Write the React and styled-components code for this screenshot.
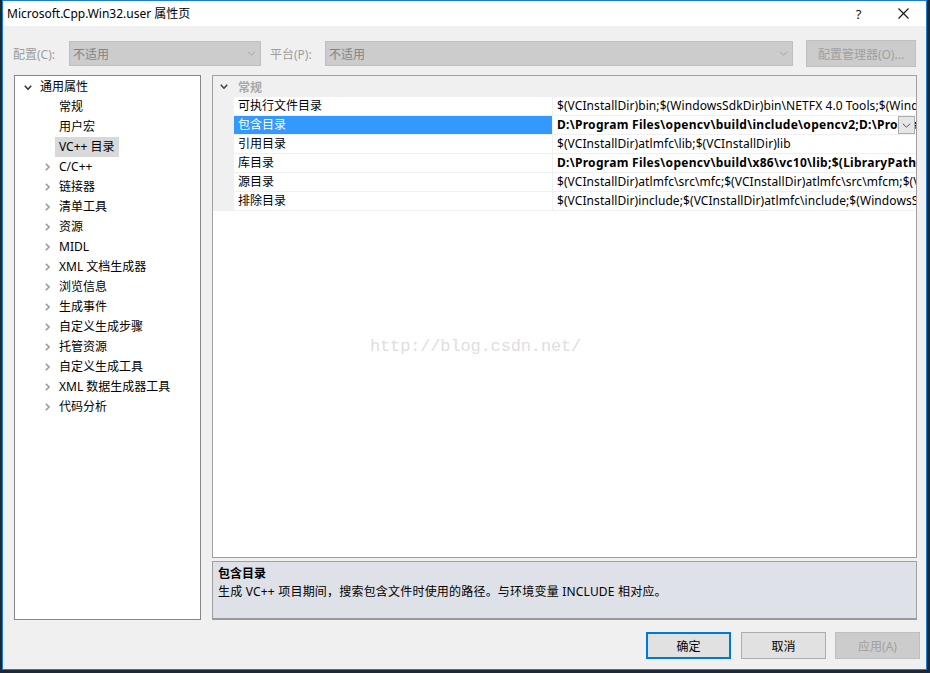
import React from 'react';
import styled, { createGlobalStyle } from 'styled-components';

const Global = createGlobalStyle`
  html, body { margin: 0; padding: 0; background: #1d2939; overflow: hidden; }
  body { font-family: "Noto Sans", "Noto Sans CJK SC", sans-serif; font-size: 12px; color: #000; }
  * { box-sizing: border-box; }
`;

const Window = styled.div`
  margin-left: 2px;
  width: 925px;
  height: 670px;
  border: 1px solid #1a7fd4;
  background: #f0f0f0;
  display: flex;
  flex-direction: column;
  position: relative;
`;

const TitleBar = styled.div`
  height: 25px;
  background: #fff;
  display: flex;
  align-items: center;
  justify-content: space-between;
  padding-left: 4px;
`;

const TitleText = styled.span`
  font-size: 12px;
  line-height: 16px;
`;

const Controls = styled.div`
  display: flex;
  height: 100%;
`;

const CtrlBtn = styled.div`
  width: 45px;
  height: 100%;
  display: flex;
  align-items: center;
  justify-content: center;
  font-size: 13px;
  color: #111;
`;

const Toolbar = styled.div`
  display: flex;
  align-items: center;
  height: 49px;
  padding: 15px 10px 9px 10px;
`;

const Label = styled.span`
  width: ${p => p.$w}px;
  color: #9d9d9d;
  font-size: 12px;
`;

const Combo = styled.div`
  width: ${p => p.$w}px;
  height: 25px;
  margin-right: ${p => p.$mr || 0}px;
  background: #cccccc;
  border: 1px solid #bfbfbf;
  display: flex;
  align-items: center;
  justify-content: space-between;
  padding: 0 4px 0 3px;
  color: #838383;
`;

const GreyButton = styled.div`
  margin-left: auto;
  width: 110px;
  height: 27px;
  background: #cccccc;
  border: 1px solid #bfbfbf;
  display: flex;
  align-items: center;
  justify-content: center;
  color: #a0a0a0;
`;

const Main = styled.div`
  display: flex;
  height: 545px;
  padding: 0 8px 0 11px;
  gap: 11px;
`;

const Tree = styled.div`
  width: 187px;
  height: 100%;
  background: #fff;
  border: 1px solid #828790;
  padding-top: 1px;
`;

const TreeRow = styled.div`
  height: 20px;
  display: flex;
  align-items: center;
  padding-left: ${p => (p.$level ? 26 : 7)}px;
`;

const Toggle = styled.span`
  width: 12px;
  height: 20px;
  display: flex;
  align-items: center;
  justify-content: center;
`;

const TreeLabel = styled.span`
  margin-left: 2px;
  padding: 0 4px;
  line-height: 20px;
  background: ${p => (p.$selected ? '#d9d9d9' : 'transparent')};
`;

const RightCol = styled.div`
  width: 705px;
  display: flex;
  flex-direction: column;
  gap: 3px;
`;

const Grid = styled.div`
  position: relative;
  height: 483px;
  border: 1px solid #a0a0a0;
  background: #fff;
  overflow: hidden;
`;

const Category = styled.div`
  height: 21px;
  display: flex;
  align-items: center;
  background: #f0f0f0;
`;

const CatToggle = styled.span`
  width: 21px;
  display: flex;
  justify-content: center;
  padding-left: 1px;
`;

const CatLabel = styled.span`
  padding-left: 4px;
  color: #a8a8a8;
  font-weight: bold;
`;

const PropRow = styled.div`
  display: flex;
  height: 19px;
`;

const Margin = styled.div`
  width: 21px;
  background: #f0f0f0;
`;

const NameCell = styled.div`
  width: 319px;
  border-bottom: 1px solid #f0f0f0;
  border-right: 1px solid #f0f0f0;
  background: ${p => (p.$selected ? '#3399ff' : '#fff')};
  color: ${p => (p.$selected ? '#fff' : '#000')};
  padding-left: 4px;
  line-height: 18px;
  white-space: nowrap;
`;

const ValueCell = styled.div`
  position: relative;
  flex: 1;
  border-bottom: 1px solid #f0f0f0;
  padding-left: 4px;
  line-height: 18px;
  white-space: nowrap;
  overflow: hidden;
  font-weight: ${p => (p.$bold ? 'bold' : 'normal')};
  letter-spacing: ${p => (p.$bold ? '0.28px' : '0.08px')};
`;

const DropBtn = styled.div`
  position: absolute;
  right: 1px;
  top: 0;
  width: 17px;
  height: 18px;
  background: #e6e6e6;
  border: 1px solid #acacac;
  display: flex;
  align-items: center;
  justify-content: center;
`;

const Watermark = styled.div`
  position: absolute;
  left: 157px;
  top: 261px;
  font-family: "Liberation Mono", monospace;
  font-size: 17px;
  letter-spacing: -0.15px;
  color: #dedede;
  white-space: nowrap;
`;

const Desc = styled.div`
  height: 59px;
  border: 1px solid #a0a0a0;
  border-bottom: 2px solid #9a9a9a;
  background: #dee1e7;
  padding: 3px 5px;
`;

const DescTitle = styled.div`
  font-weight: bold;
  line-height: 17px;
`;

const DescText = styled.div`
  line-height: 19px;
  letter-spacing: 0.2px;
`;

const Footer = styled.div`
  display: flex;
  justify-content: flex-end;
  padding: 12px 6px 0 0;
`;

const Btn = styled.div`
  width: 85px;
  height: 27px;
  margin-left: ${p => p.$ml}px;
  display: flex;
  align-items: center;
  justify-content: center;
  background: ${p => (p.$disabled ? '#cccccc' : '#e1e1e1')};
  border: ${p => (p.$primary ? '2px solid #0078d7' : p.$disabled ? '1px solid #bfbfbf' : '1px solid #adadad')};
  color: ${p => (p.$disabled ? '#a0a0a0' : '#000')};
`;

const ChevronDown = ({ color = '#444', w = 8, h = 5, sw = 1.6 }) => (
  <svg width={w} height={h} viewBox={`0 0 ${w} ${h}`}>
    <polyline points={`0.8,0.8 ${w / 2},${h - 0.8} ${w - 0.8},0.8`} fill="none" stroke={color} strokeWidth={sw} />
  </svg>
);

const ChevronRight = () => (
  <svg width="5" height="8" viewBox="0 0 5 8">
    <polyline points="0.8,0.8 4,4 0.8,7.2" fill="none" stroke="#9c9c9c" strokeWidth="1.6" />
  </svg>
);

const CloseIcon = () => (
  <svg width="11" height="11" viewBox="0 0 11 11">
    <line x1="0.5" y1="0.5" x2="10.5" y2="10.5" stroke="#111" strokeWidth="1.1" />
    <line x1="10.5" y1="0.5" x2="0.5" y2="10.5" stroke="#111" strokeWidth="1.1" />
  </svg>
);

const treeItems = [
  { label: '通用属性', level: 0, open: true },
  { label: '常规', level: 1, leaf: true },
  { label: '用户宏', level: 1, leaf: true },
  { label: 'VC++ 目录', level: 1, leaf: true, selected: true },
  { label: 'C/C++', level: 1 },
  { label: '链接器', level: 1 },
  { label: '清单工具', level: 1 },
  { label: '资源', level: 1 },
  { label: 'MIDL', level: 1 },
  { label: 'XML 文档生成器', level: 1 },
  { label: '浏览信息', level: 1 },
  { label: '生成事件', level: 1 },
  { label: '自定义生成步骤', level: 1 },
  { label: '托管资源', level: 1 },
  { label: '自定义生成工具', level: 1 },
  { label: 'XML 数据生成器工具', level: 1 },
  { label: '代码分析', level: 1 },
];

const props = [
  { name: '可执行文件目录', value: '$(VCInstallDir)bin;$(WindowsSdkDir)bin\\NETFX 4.0 Tools;$(WindowsSdkDir)bin;$(VSInstallDir)Common7\\Tools\\bin' },
  { name: '包含目录', value: 'D:\\Program Files\\opencv\\build\\include\\opencv2;D:\\Program Files\\opencv\\build\\include;$(IncludePath)', bold: true, selected: true },
  { name: '引用目录', value: '$(VCInstallDir)atlmfc\\lib;$(VCInstallDir)lib' },
  { name: '库目录', value: 'D:\\Program Files\\opencv\\build\\x86\\vc10\\lib;$(LibraryPath)', bold: true },
  { name: '源目录', value: '$(VCInstallDir)atlmfc\\src\\mfc;$(VCInstallDir)atlmfc\\src\\mfcm;$(VCInstallDir)atlmfc\\src\\atl;$(VCInstallDir)crt\\src' },
  { name: '排除目录', value: '$(VCInstallDir)include;$(VCInstallDir)atlmfc\\include;$(WindowsSdkDir)include;$(FrameworkSDKDir)\\include' },
];

export default function App() {
  return (
    <>
      <Global />
      <Window>
        <TitleBar>
          <TitleText>Microsoft.Cpp.Win32.user 属性页</TitleText>
          <Controls>
            <CtrlBtn>?</CtrlBtn>
            <CtrlBtn><CloseIcon /></CtrlBtn>
          </Controls>
        </TitleBar>
        <Toolbar>
          <Label $w={56}>配置(C):</Label>
          <Combo $w={192} $mr={9}>
            <span>不适用</span>
            <ChevronDown color="#a8a8a8" w={9} h={5} sw={1} />
          </Combo>
          <Label $w={55}>平台(P):</Label>
          <Combo $w={468}>
            <span>不适用</span>
            <ChevronDown color="#a8a8a8" w={9} h={5} sw={1} />
          </Combo>
          <GreyButton>配置管理器(O)...</GreyButton>
        </Toolbar>
        <Main>
          <Tree>
            {treeItems.map((it, i) => (
              <TreeRow key={i} $level={it.level}>
                <Toggle>
                  {it.open ? <ChevronDown color="#333" w={8} h={5} sw={1.6} /> : it.leaf ? null : <ChevronRight />}
                </Toggle>
                <TreeLabel $selected={it.selected}>{it.label}</TreeLabel>
              </TreeRow>
            ))}
          </Tree>
          <RightCol>
            <Grid>
              <Category>
                <CatToggle><ChevronDown color="#444" w={8} h={5} sw={1.6} /></CatToggle>
                <CatLabel>常规</CatLabel>
              </Category>
              {props.map((p, i) => (
                <PropRow key={i}>
                  <Margin />
                  <NameCell $selected={p.selected}>{p.name}</NameCell>
                  <ValueCell $bold={p.bold}>
                    {p.value}
                    {p.selected && (
                      <DropBtn><ChevronDown color="#555" w={9} h={5} sw={1} /></DropBtn>
                    )}
                  </ValueCell>
                </PropRow>
              ))}
              <Watermark>http://blog.csdn.net/</Watermark>
            </Grid>
            <Desc>
              <DescTitle>包含目录</DescTitle>
              <DescText>生成 VC++ 项目期间，搜索包含文件时使用的路径。与环境变量 INCLUDE 相对应。</DescText>
            </Desc>
          </RightCol>
        </Main>
        <Footer>
          <Btn $primary $ml={0}>确定</Btn>
          <Btn $ml={10}>取消</Btn>
          <Btn $disabled $ml={9}>应用(A)</Btn>
        </Footer>
      </Window>
    </>
  );
}
